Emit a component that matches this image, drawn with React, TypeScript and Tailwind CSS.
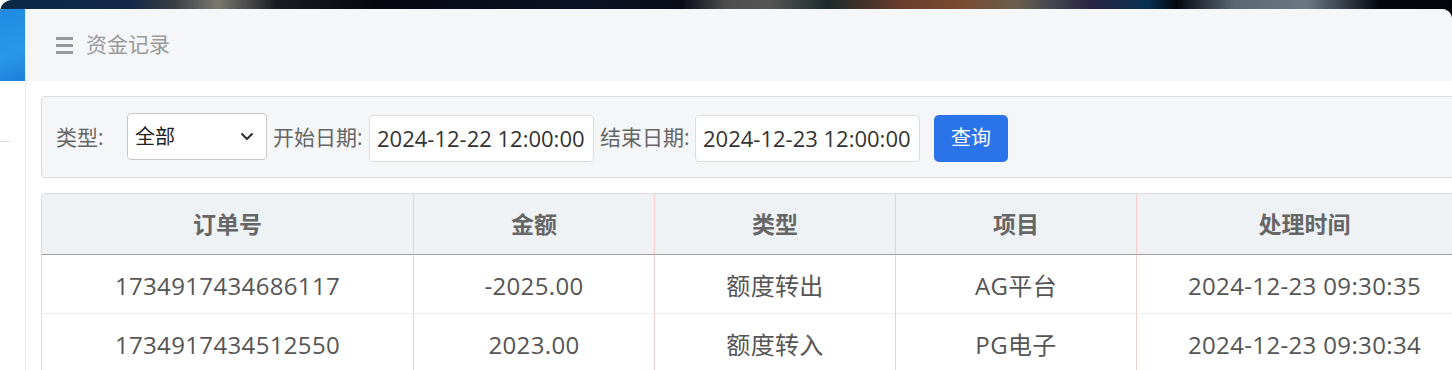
const rows = [
  { order: "1734917434686117", amount: "-2025.00", type: "额度转出", item: "AG平台", time: "2024-12-23 09:30:35" },
  { order: "1734917434512550", amount: "2023.00", type: "额度转入", item: "PG电子", time: "2024-12-23 09:30:34" },
];

const font = "font-['Open_Sans','Noto_Sans_CJK_SC',sans-serif]";

export default function App() {
  return (
    <div className={`h-[370px] w-[1452px] overflow-hidden bg-white ${font}`}>
      <div className="rounded-tl-[12px] bg-[linear-gradient(to_right,#0a2a46_0%,#13284a_9%,#3a3f44_12%,#7a7a70_15%,#1a1c24_19%,#05070f_26%,#0c1226_40%,#0a0d18_47%,#4e4e4e_50%,#555555_53%,#1c2a2c_57%,#6a3c2c_62%,#7a4a32_66%,#6a5e4c_70%,#4a4c50_72%,#2a2444_75%,#0a3252_79%,#05070f_81%,#5a6874_85%,#6a7884_90%,#05070f_95%,#03040a_100%)] pt-[9px]">
        <div className="flex h-[361px] w-[1452px] overflow-hidden rounded-tl-[3px] rounded-tr-[10px] bg-white">
          {/* sidebar strip */}
          <div className="flex w-[26px] shrink-0 flex-col border-r border-[#ececec]">
            <div className="h-[72px] shrink-0 bg-[linear-gradient(160deg,#1f8ae0,#2a98ea_60%,#1c7fd8)]" />
            <div className="mt-[60px] h-px w-[10px] bg-[#dcdcdc]" />
          </div>

          <div className="flex min-w-0 flex-1 flex-col">
            <div className="flex h-[72px] shrink-0 items-center gap-[13px] bg-[#f5f6f8] pl-[30px]">
              <div className="flex w-[17px] flex-col gap-[4px]">
                <span className="h-[3px] bg-[#9a9a9a]" />
                <span className="h-[3px] bg-[#9a9a9a]" />
                <span className="h-[3px] bg-[#9a9a9a]" />
              </div>
              <span className="text-[21px] text-[#9a9a9a]">资金记录</span>
            </div>

            <div className="shrink-0 pl-[15px] pt-[15px]">
              <div className="flex h-[82px] w-[1460px] items-center rounded-l-[4px] border border-[#d8dbdf] bg-[#f5f6f8] pl-[14px] pt-[2px] text-[21px] text-[#666]">
                <span className="w-[71px]">类型:</span>
                <div className="-mt-[3px] flex h-[47px] w-[140px] items-center justify-between rounded-[4px] border border-[#c8c8c8] bg-white pl-[7px] pr-[12px] text-[20px] text-[#222]">
                  <span>全部</span>
                  <svg width="14" height="9" viewBox="0 0 14 9" fill="none" stroke="#333" strokeWidth="2.2">
                    <path d="M1.5 1.5 7 7l5.5-5.5" />
                  </svg>
                </div>
                <span className="ml-[6px] w-[96px]">开始日期:</span>
                <div className="flex h-[47px] w-[225px] items-center rounded-[4px] border border-[#dcdcdc] bg-white pl-[7px] text-[22px] text-[#333]">
                  2024-12-22 12:00:00
                </div>
                <span className="ml-[6px] w-[95px]">结束日期:</span>
                <div className="flex h-[47px] w-[225px] items-center rounded-[4px] border border-[#dcdcdc] bg-white pl-[7px] text-[22px] text-[#333]">
                  2024-12-23 12:00:00
                </div>
                <button className="ml-[14px] h-[47px] w-[74px] rounded-[5px] bg-[#2a73e8] text-[20px] text-white">
                  查询
                </button>
              </div>

              <table className="mt-[15px] w-[1431px] table-fixed border-separate border-spacing-0 text-center">
                <colgroup>
                  <col className="w-[372px]" />
                  <col className="w-[241px]" />
                  <col className="w-[241px]" />
                  <col className="w-[241px]" />
                  <col className="w-[336px]" />
                </colgroup>
                <thead>
                  <tr className="h-[62px] bg-[#eff2f5] text-[23px] font-bold text-[#666]">
                    {["订单号", "金额", "类型", "项目", "处理时间"].map((h, i) => (
                      <th
                        key={h}
                        className={`border-b border-t border-b-[#a59c9c] border-t-[#dadde1] ${
                          i === 0 ? "rounded-tl-[5px] border-l border-l-[#dadde1]" : "border-l border-l-[#f5cccc]"
                        }`}
                      >
                        {h}
                      </th>
                    ))}
                  </tr>
                </thead>
                <tbody>
                  {rows.map((r) => (
                    <tr key={r.order} className="h-[59px] pt-[2px] text-[24px] tracking-[0.35px] text-[#555]">
                      <td className="border-b border-l border-b-[#ececec] border-l-[#dadde1] pt-[3px]">{r.order}</td>
                      <td className="border-b border-l border-b-[#ececec] border-l-[#f5cccc] pt-[3px]">{r.amount}</td>
                      <td className="border-b border-l border-b-[#ececec] border-l-[#f5cccc] pt-[3px]">{r.type}</td>
                      <td className="border-b border-l border-b-[#ececec] border-l-[#f5cccc] pt-[3px]">{r.item}</td>
                      <td className="border-b border-l border-b-[#ececec] border-l-[#f5cccc] pt-[3px]">{r.time}</td>
                    </tr>
                  ))}
                </tbody>
              </table>
            </div>
          </div>
        </div>
      </div>
    </div>
  );
}
